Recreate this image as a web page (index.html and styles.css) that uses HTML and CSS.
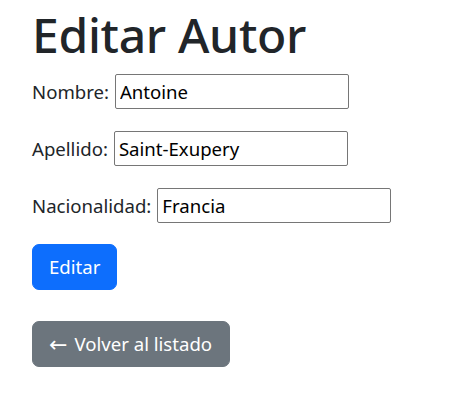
FILE: index.html
```html
<!DOCTYPE html>
<html lang="es">
<head>
<meta charset="utf-8">
<title>Editar Autor</title>
<link rel="stylesheet" href="styles.css">
</head>
<body>
<div class="page">
  <h1 class="title">Editar Autor</h1>
  <form class="form">
    <div class="field">
      <label class="label" for="nombre">Nombre:</label>
      <input class="input" id="nombre" type="text" value="Antoine">
    </div>
    <div class="field">
      <label class="label" for="apellido">Apellido:</label>
      <input class="input" id="apellido" type="text" value="Saint-Exupery">
    </div>
    <div class="field">
      <label class="label" for="nacionalidad">Nacionalidad:</label>
      <input class="input" id="nacionalidad" type="text" value="Francia">
    </div>
    <button class="btn btn-primary" type="button">Editar</button>
  </form>
  <a class="btn btn-secondary" href="#"><span class="arrow">←</span><span>Volver al listado</span></a>
</div>
</body>
</html>
```

FILE: styles.css
```css
* { box-sizing: border-box; }
html, body { margin: 0; padding: 0; background: #fff; }
body {
  font-family: "Noto Sans", "Open Sans", sans-serif;
  font-size: 18.6px;
  line-height: 1.5;
  color: #212529;
}
.page {
  padding: 6px 32px 0;
}
.title {
  margin: 0 0 10px;
  font-size: 48px;
  font-weight: 500;
  line-height: 1.2;
  letter-spacing: -0.3px;
  color: #212529;
}
.form {
  margin: 0;
}
.field {
  display: flex;
  align-items: baseline;
  gap: 6px;
  margin-bottom: 22px;
}
.label {
  color: #212529;
}
.input {
  width: 234px;
  height: 35px;
  padding: 0 4px;
  font-family: inherit;
  font-size: 18.6px;
  line-height: 33px;
  color: #000;
  border: 1px solid #767676;
  border-radius: 2px;
  background: #fff;
}
.btn {
  display: inline-flex;
  align-items: center;
  justify-content: center;
  gap: 6px;
  height: 46px;
  padding: 0 16px;
  font-family: inherit;
  font-size: 18.6px;
  line-height: 1.5;
  color: #fff;
  border: 1px solid transparent;
  border-radius: 7px;
  text-decoration: none;
  cursor: pointer;
}
.btn-primary {
  background: #0d6efd;
  border-color: #0d6efd;
  margin-top: -1px;
}
.btn-secondary {
  background: #6c757d;
  border-color: #6c757d;
  margin-top: 31px;
  padding: 0 17px 0 16px;
  gap: 7px;
}
.arrow {
  font-family: "DejaVu Sans", sans-serif;
  font-size: 22px;
  line-height: 1;
  position: relative;
  top: 1px;
}
```
